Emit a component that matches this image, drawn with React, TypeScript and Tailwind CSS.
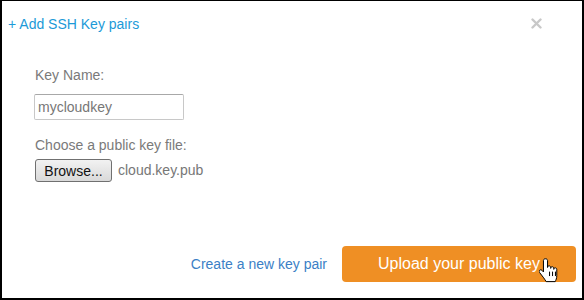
import React from 'react';

function HandCursor() {
  return (
    <svg width="20" height="27" viewBox="0 0 18 24" className="absolute left-[197px] top-[11px]">
      <path
        d="M5.5 1.5c-.9 0-1.5.7-1.5 1.6v10.2l-1.3-1.4c-.7-.7-1.7-.7-2.2 0-.5.6-.4 1.4.1 2l3.6 4.7c.9 1.2 1.6 2.4 2.2 3.4h8.2c.6-1.4 1.4-3 1.4-5.3v-5.6c0-.9-.6-1.5-1.4-1.5s-1.3.6-1.3 1.4v-.9c0-.9-.6-1.5-1.4-1.5s-1.4.6-1.4 1.5v-.8c0-.9-.6-1.5-1.4-1.5s-1.4.6-1.4 1.5V3.1c0-.9-.7-1.6-1.5-1.6z"
        fill="#fff"
        stroke="#000"
        strokeWidth="0.9"
        strokeLinejoin="round"
      />
      <path d="M9.5 13v4M12.2 13v4M14.8 13v4" stroke="#000" strokeWidth="0.9" />
    </svg>
  );
}

export default function App() {
  return (
    <div
      className="w-[584px] h-[300px] bg-white border-t border-x-2 border-b-2 border-black flex flex-col text-[14px]"
      style={{ fontFamily: '"Liberation Sans", Arial, sans-serif' }}
    >
      {/* header */}
      <div className="flex items-center justify-between pl-[6px] pr-[40px] pt-[13px] h-[32px]">
        <span className="text-[#1c9ad8] text-[14px] leading-none">+ Add SSH Key pairs</span>
        <svg width="11" height="11" viewBox="0 0 11 11">
          <path d="M1.5 1.5l8 8M9.5 1.5l-8 8" stroke="#c8c8c8" strokeWidth="2.4" strokeLinecap="round" />
        </svg>
      </div>

      {/* form */}
      <div className="flex flex-col pl-[32px] pt-[35px] text-[#7a7a7a]">
        <label className="leading-none pl-[1px]">Key Name:</label>
        <div className="mt-[12px] w-[150px] h-[26px] border border-[#c8c8c8] border-t-[#a8a8a8] rounded-[2px] flex items-center pl-[3px] text-[14px] text-[#777]">
          mycloudkey
        </div>
        <label className="leading-none pl-[1px] mt-[18px]">Choose a public key file:</label>
        <div className="flex items-center mt-[7px]">
          <button className="ml-[1px] w-[77px] h-[23px] border border-[#707070] rounded-[3px] bg-gradient-to-b from-[#f2f2f2] to-[#d9d9d9] text-[#111] text-[14px] leading-none">
            Browse...
          </button>
          <span className="ml-[6px] text-[#777]">cloud.key.pub</span>
        </div>
      </div>

      {/* footer */}
      <div className="mt-auto mb-[16px] flex items-center justify-end pr-[6px] gap-[15px]">
        <a className="text-[#3b7fc6] text-[14px] leading-none">Create a new key pair</a>
        <div className="relative">
          <button className="w-[234px] h-[36px] rounded-[4px] bg-[#ef8f24] text-white text-[16px] leading-none">
            Upload your public key
          </button>
          <HandCursor />
        </div>
      </div>
    </div>
  );
}
